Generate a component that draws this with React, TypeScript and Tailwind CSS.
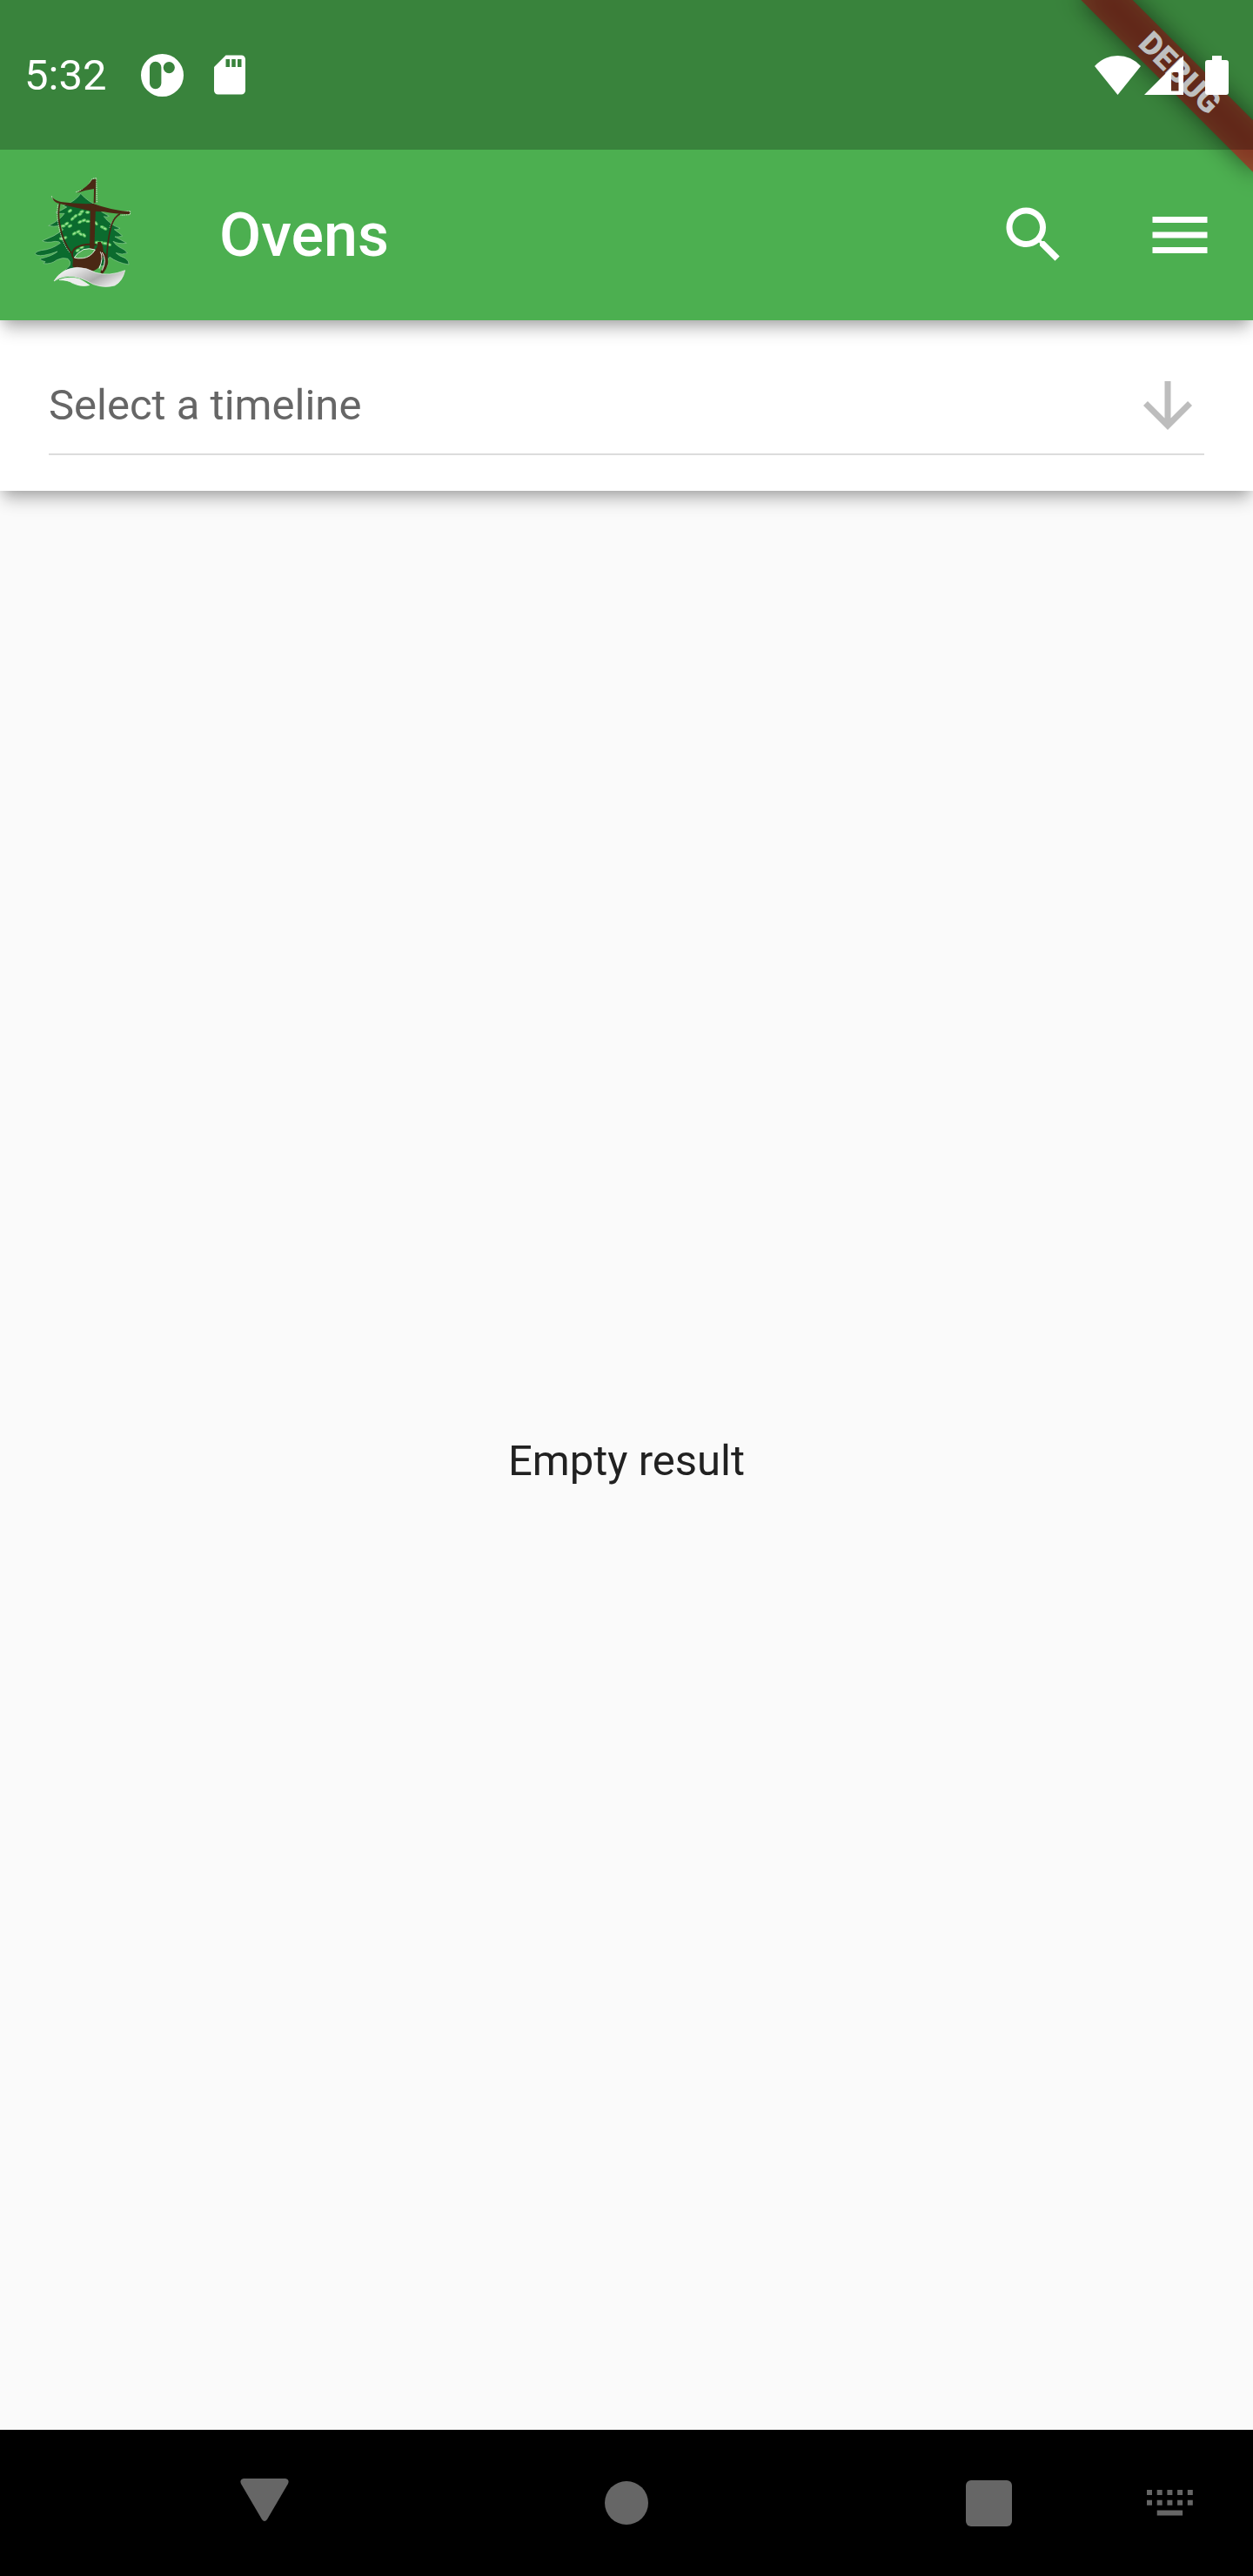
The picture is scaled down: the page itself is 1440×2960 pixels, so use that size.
import React from "react";

const leaves: [number, number, number][] = [
  [158, 209, -10],
  [170, 201, -30],
  [181, 209, -20],
  [190, 184, -40],
  [200, 175, -40],
  [181, 157, -30],
  [216, 168, -25],
  [222, 160, -20],
  [242, 162, 0],
  [216, 195, -30],
  [229, 190, -20],
  [243, 193, 0],
  [196, 235, -30],
  [210, 229, -20],
  [218, 237, 30],
  [230, 241, 45],
  [271, 200, 50],
  [293, 213, 20],
  [302, 218, 20],
  [152, 253, 10],
  [164, 250, -20],
  [275, 266, -10],
  [288, 267, -10],
  [302, 269, 10],
  [316, 273, 15],
  [208, 293, -30],
  [222, 283, -20],
];

function TreeShipLogo() {
  return (
    <svg viewBox="0 0 450 480" className="h-40 w-[150px]" role="img" aria-label="Tree and ship logo">
      <defs>
        <linearGradient id="wave" x1="0" y1="0" x2="1" y2="0.5">
          <stop offset="0" stopColor="#ffffff" />
          <stop offset="0.35" stopColor="#dedede" />
          <stop offset="0.7" stopColor="#adadad" />
          <stop offset="1" stopColor="#e4e4e4" />
        </linearGradient>
      </defs>
      <path
        fill="#0b6b2e"
        stroke="#8cc992"
        strokeWidth="2"
        d="M218 97 C205 117 180 132 158 139 L170 144 Q152 156 132 162 Q144 168 162 166 Q146 190 107 208 Q124 213 148 208 Q150 216 158 222 Q130 244 86 260 Q100 269 130 262 Q146 262 148 268 Q118 290 82 293 Q64 296 61 304 Q66 314 92 310 Q115 306 138 297 Q122 312 78 322 Q80 330 96 332 L90 338 Q116 342 136 326 Q156 316 174 322 Q186 332 180 346 Q174 352 164 362 L200 354 L312 345 Q306 326 318 316 Q345 336 384 342 Q386 330 372 320 Q350 312 340 302 Q362 310 379 302 Q372 290 352 282 Q338 274 330 262 Q348 272 376 268 Q356 256 336 246 Q348 248 362 243 Q350 232 334 221 Q344 223 354 217 Q320 205 298 176 Q308 180 316 175 Q300 166 290 160 L285 142 Q245 128 218 97 Z"
      />
      {leaves.map(([x, y, angle]) => (
        <ellipse
          key={`${x}-${y}`}
          cx={x}
          cy={y}
          rx="7"
          ry="4"
          transform={`rotate(${angle} ${x} ${y})`}
          fill="#a5e39a"
          stroke="#4fbd58"
          strokeWidth="3"
        />
      ))}
      <g fill="none" stroke="#e3ddd4" strokeWidth="3" strokeDasharray="4 3">
        <path d="M272 46 L274 128 M118 106 Q122 120 136 126 M389 158 L388 170 L356 172 M272 44 L258 46 Q244 70 232 80 M202 92 L230 82 M140 136 Q134 170 142 208 Q152 264 180 300 M300 152 Q340 160 388 158 M345 172 Q326 190 318 216" />
      </g>
      <g fill="#4a2814">
        <path d="M271 47 L258 49 Q243 74 205 95 Q235 84 264 81 L263 130 L269 130 Z" />
        <path d="M120 110 Q128 120 150 126 Q200 134 262 132 Q320 154 388 160 L386 168 Q350 170 298 160 Q255 160 225 151 Q180 142 138 130 Q124 124 120 110 Z" />
        <path d="M252 138 L270 138 L265 290 L249 290 Z" />
        <path d="M192 318 Q228 328 262 298 L274 284 L277 264 L288 264 Q308 300 280 352 Q266 368 240 366 Q200 360 190 348 Z" />
      </g>
      <g fill="none" stroke="#4a2814" strokeLinecap="round">
        <path strokeWidth="5" d="M146 132 Q138 165 146 205 Q156 262 186 302" />
        <path strokeWidth="5" d="M352 168 Q330 182 322 215 Q310 262 308 324" />
        <path strokeWidth="11" d="M276 290 Q312 308 306 340 Q302 355 292 368" />
        <path strokeWidth="6" d="M192 318 Q182 298 202 284 Q232 268 270 274" />
      </g>
      <path
        fill="#55b258"
        stroke="#e2efe0"
        strokeWidth="3"
        d="M196 318 Q204 302 228 290 Q248 284 268 291 Q254 316 226 320 Q206 322 196 318 Z"
      />
      <path fill="none" stroke="#eeeae5" strokeWidth="3" d="M286 298 Q298 318 282 356 M292 300 Q310 326 292 362" />
      <path
        fill="url(#wave)"
        stroke="#f3f3f3"
        strokeWidth="2"
        d="M126 399 Q152 356 206 352 Q238 352 270 370 Q315 384 371 362 Q362 400 336 414 Q300 424 262 410 Q216 382 174 382 Q144 386 126 399 Z"
      />
      <path
        fill="#ececec"
        stroke="#ffffff"
        strokeWidth="2"
        d="M144 395 Q178 382 214 392 Q236 404 248 413 Q220 420 190 406 Q176 395 144 395 Z"
      />
    </svg>
  );
}

function DebugRibbon() {
  return (
    <div className="pointer-events-none absolute top-0 right-0 size-[300px] overflow-hidden">
      <div className="absolute top-[63px] left-[76px] h-[42px] w-[280px] rotate-45">
        <div className="absolute inset-0 bg-black/50 blur-[14px]" />
        <div className="absolute inset-0 flex items-center justify-center bg-[#b71c1ca0] text-[36px] leading-none font-black text-white">
          DEBUG
        </div>
      </div>
    </div>
  );
}

function StatusBar() {
  return (
    <div className="relative flex h-[172px] items-center bg-black/25 px-7 text-white">
      <span className="text-[49px] leading-none">5:32</span>
      <svg viewBox="0 0 49 49" className="ml-10 size-[49px]" fill="#fff" aria-hidden="true">
        <path
          fillRule="evenodd"
          d="M24.500 0a24.500 24.500 0 1 1 0 49a24.500 24.500 0 1 1 0-49ZM10 15.500v18a6.700 6.700 0 0 0 13.400 0v-18a6.700 6.700 0 0 0-13.400 0ZM32.300 9a6.600 6.600 0 1 0 0 13.200a6.600 6.600 0 1 0 0-13.200Z"
        />
      </svg>
      <svg viewBox="0 0 24 24" className="ml-[26px] size-[54px]" fill="#fff" aria-hidden="true">
        <path d="M18 2h-8L4.020 8 4 20c0 1.100.9 2 2 2h12c1.100 0 2-.9 2-2V4c0-1.100-.9-2-2-2zm-6 6h-2V4h2v4zm3 0h-2V4h2v4zm3 0h-2V4h2v4z" />
      </svg>
      <div className="ml-auto flex items-center">
        <svg viewBox="0 0 53 45" className="h-[45px] w-[53px]" fill="#fff" aria-hidden="true">
          <path d="M0 12Q11 0 26.500 0T53 12L26.500 45Z" />
        </svg>
        <svg viewBox="0 0 45 45" className="ml-1 size-[45px]" fill="#fff" aria-hidden="true">
          <path fillRule="evenodd" d="M0 45L45 0V45ZM31 19L39.500 19V40.500H31Z" />
        </svg>
        <svg viewBox="0 0 27 45" className="ml-[25px] h-[45px] w-[27px]" fill="#fff" aria-hidden="true">
          <path d="M8 0h11v5h5q3 0 3 3v34q0 3-3 3H3q-3 0-3-3V8q0-3 3-3h5Z" />
        </svg>
      </div>
    </div>
  );
}

function AppBar() {
  return (
    <div className="flex h-[196px] items-center text-white">
      <div className="w-[252px] pl-5">
        <TreeShipLogo />
      </div>
      <h1 className="flex-1 text-[70px] leading-none font-medium">Ovens</h1>
      <button type="button" aria-label="Search" className="flex size-[168px] items-center justify-center">
        <svg viewBox="0 0 24 24" className="size-[84px]" fill="currentColor" aria-hidden="true">
          <path d="M15.500 14h-.79l-.28-.27C15.410 12.590 16 11.110 16 9.500 16 5.910 13.090 3 9.500 3S3 5.910 3 9.500 5.910 16 9.500 16c1.610 0 3.090-.59 4.230-1.570l.27.28v.79l5 4.990L20.490 19l-4.990-5zm-6 0C7.010 14 5 11.990 5 9.500S7.010 5 9.500 5 14 7.010 14 9.500 11.990 14 9.500 14z" />
        </svg>
      </button>
      <button type="button" aria-label="Menu" className="flex size-[168px] items-center justify-center">
        <svg viewBox="0 0 24 24" className="size-[84px]" fill="currentColor" aria-hidden="true">
          <path d="M3 18h18v-2H3v2zm0-5h18v-2H3v2zm0-7v2h18V6H3z" />
        </svg>
      </button>
    </div>
  );
}

function TimelinePicker() {
  return (
    <section className="relative z-10 bg-white px-14 pt-14 pb-[41px] shadow-[0_14px_18px_-4px_rgba(0,0,0,0.24),0_4px_14px_-4px_rgba(0,0,0,0.2)]">
      <div className="flex items-center border-b-2 border-[#dcdcdc] pb-[13px]">
        <select
          aria-label="Timeline"
          defaultValue=""
          className="h-[84px] flex-1 appearance-none bg-transparent text-[49px] text-[#666666] outline-none"
        >
          <option value="">Select a timeline</option>
        </select>
        <svg viewBox="0 0 24 24" className="pointer-events-none size-[84px]" fill="#bdbdbd" aria-hidden="true">
          <path d="M20 12l-1.410-1.410L13 16.170V4h-2v12.170l-5.580-5.590L4 12l8 8 8-8z" />
        </svg>
      </div>
    </section>
  );
}

function NavigationBar() {
  return (
    <nav aria-label="System" className="flex h-[168px] bg-black pl-[200px]">
      <div className="flex flex-1 justify-between">
        <button type="button" aria-label="Back" className="flex w-[208px] items-center justify-center">
          <svg viewBox="0 0 56 56" className="size-14" fill="#666" aria-hidden="true">
            <path d="M4 0H52Q57 1 55 6L31 47Q28 51 25 47L1 6Q-1 1 4 0Z" />
          </svg>
        </button>
        <button type="button" aria-label="Home" className="flex w-[208px] items-center justify-center">
          <span className="size-[50px] rounded-full bg-[#666]" />
        </button>
        <button type="button" aria-label="Recent apps" className="flex w-[208px] items-center justify-center">
          <span className="size-[53px] rounded-md bg-[#666]" />
        </button>
      </div>
      <button type="button" aria-label="Switch keyboard" className="ml-2 flex w-48 items-center justify-center">
        <svg viewBox="0 0 53 30" className="h-[30px] w-[53px]" fill="#666" aria-hidden="true">
          <path d="M0 0h6v6H0ZM11.700 0h6v6h-6ZM23.400 0h6v6h-6ZM35.100 0h6v6h-6ZM46.800 0h6v6h-6ZM0 11.700h6v6H0ZM11.700 11.700h6v6h-6ZM23.400 11.700h6v6h-6ZM35.100 11.700h6v6h-6ZM46.800 11.700h6v6h-6ZM11.700 23.500h29.400v6H11.700Z" />
        </svg>
      </button>
    </nav>
  );
}

export default function App() {
  return (
    <div className="flex min-h-screen flex-col bg-[#fafafa] font-[Roboto,sans-serif]">
      <header className="relative z-20 bg-[#4caf50] shadow-[0_14px_18px_-4px_rgba(0,0,0,0.24),0_4px_14px_-4px_rgba(0,0,0,0.2)]">
        <DebugRibbon />
        <StatusBar />
        <AppBar />
      </header>
      <TimelinePicker />
      <main className="flex flex-1 items-center justify-center">
        <p className="text-[49px] leading-none text-[#212121]">Empty result</p>
      </main>
      <NavigationBar />
    </div>
  );
}
